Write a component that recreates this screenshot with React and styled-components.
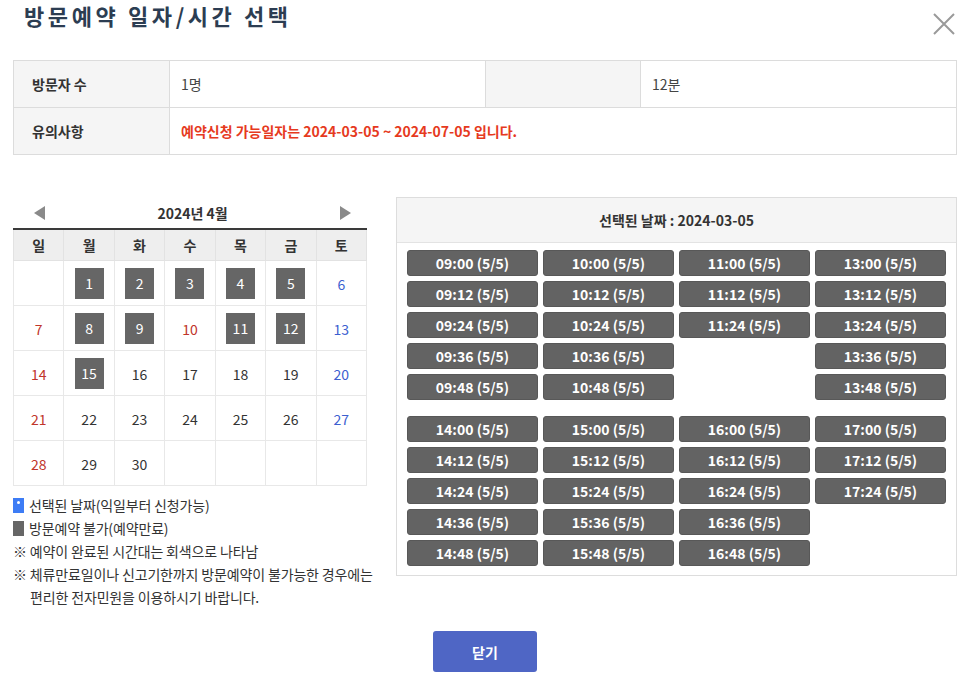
import styled, { createGlobalStyle } from "styled-components";

const GlobalStyle = createGlobalStyle`
  body {
    margin: 0;
    background: #fff;
    font-family: "Noto Sans CJK KR", "Noto Sans", sans-serif;
    color: #333;
  }
`;

const weekDays = ["일", "월", "화", "수", "목", "금", "토"];

// April 2024, starts on Monday
const weeks = [
  [null, 1, 2, 3, 4, 5, 6],
  [7, 8, 9, 10, 11, 12, 13],
  [14, 15, 16, 17, 18, 19, 20],
  [21, 22, 23, 24, 25, 26, 27],
  [28, 29, 30, null, null, null, null],
];
const blocked = [1, 2, 3, 4, 5, 8, 9, 11, 12, 15];
const holidays = [10];

const minutes = ["00", "12", "24", "36", "48"];
const slotGroups = [
  [
    ["09", 5],
    ["10", 5],
    ["11", 3],
    ["13", 5],
  ],
  [
    ["14", 5],
    ["15", 5],
    ["16", 5],
    ["17", 3],
  ],
];

const dayTone = (day, col) => {
  if (col === 0 || holidays.includes(day)) return "sun";
  if (col === 6) return "sat";
  return "normal";
};

const App = () => {
  return (
    <Page>
      <GlobalStyle />
      <Header>
        <Title>방문예약 일자/시간 선택</Title>
        <CloseIcon aria-label="close">
          <svg width="22" height="22" viewBox="0 0 22 22">
            <path d="M1 1 L21 21 M21 1 L1 21" stroke="#9a9a9a" strokeWidth="2" fill="none" />
          </svg>
        </CloseIcon>
      </Header>

      <InfoTable>
        <colgroup>
          <col style={{ width: 156 }} />
          <col style={{ width: 316 }} />
          <col style={{ width: 155 }} />
          <col />
        </colgroup>
        <tbody>
          <tr>
            <LabelCell>방문자 수</LabelCell>
            <ValueCell>1명</ValueCell>
            <LabelCell />
            <ValueCell>12분</ValueCell>
          </tr>
          <tr>
            <LabelCell>유의사항</LabelCell>
            <ValueCell colSpan={3} warn>
              예약신청 가능일자는 2024-03-05 ~ 2024-07-05 입니다.
            </ValueCell>
          </tr>
        </tbody>
      </InfoTable>

      <Main>
        <CalendarColumn>
          <CalendarNav>
            <Arrow dir="left" />
            <MonthLabel>2024년 4월</MonthLabel>
            <Arrow dir="right" />
          </CalendarNav>
          <CalendarTable>
            <thead>
              <tr>
                {weekDays.map((d) => (
                  <WeekHead key={d}>{d}</WeekHead>
                ))}
              </tr>
            </thead>
            <tbody>
              {weeks.map((week, wi) => (
                <tr key={wi}>
                  {week.map((day, ci) => (
                    <DayCell key={ci}>
                      {day &&
                        (blocked.includes(day) ? (
                          <BlockedDay>{day}</BlockedDay>
                        ) : (
                          <DayNum tone={dayTone(day, ci)}>{day}</DayNum>
                        ))}
                    </DayCell>
                  ))}
                </tr>
              ))}
            </tbody>
          </CalendarTable>

          <Legend>
            <LegendItem>
              <Swatch color="#3d7cf5">
                <Dot />
              </Swatch>
              선택된 날짜(익일부터 신청가능)
            </LegendItem>
            <LegendItem>
              <Swatch color="#666" />
              방문예약 불가(예약만료)
            </LegendItem>
            <Note>※ 예약이 완료된 시간대는 회색으로 나타남</Note>
            <Note>
              ※ 체류만료일이나 신고기한까지 방문예약이 불가능한 경우에는
              <br />
              편리한 전자민원을 이용하시기 바랍니다.
            </Note>
          </Legend>
        </CalendarColumn>

        <TimePanel>
          <TimeHeader>선택된 날짜 : 2024-03-05</TimeHeader>
          <TimeBody>
            {slotGroups.map((group, gi) => (
              <SlotGroup key={gi}>
                {group.map(([hour, count]) => (
                  <SlotColumn key={hour}>
                    {minutes.slice(0, count).map((m) => (
                      <SlotButton key={m}>
                        {hour}:{m} (5/5)
                      </SlotButton>
                    ))}
                  </SlotColumn>
                ))}
              </SlotGroup>
            ))}
          </TimeBody>
        </TimePanel>
      </Main>

      <Footer>
        <CloseButton>닫기</CloseButton>
      </Footer>
    </Page>
  );
};

const Page = styled.div`
  width: 944px;
  padding: 0 9px 0 13px;
`;

const Header = styled.div`
  display: flex;
  justify-content: space-between;
  align-items: flex-start;
  height: 60px;
`;

const Title = styled.h1`
  margin: 0;
  padding-left: 11px;
  font-size: 22px;
  line-height: 31px;
  font-weight: 700;
  letter-spacing: 3.6px;
  color: #2c3d52;
`;

const CloseIcon = styled.button`
  margin: 13px 2px 0 0;
  padding: 0;
  border: 0;
  background: none;
  width: 22px;
  height: 22px;
  cursor: pointer;
  svg {
    display: block;
  }
`;

const InfoTable = styled.table`
  width: 100%;
  border-collapse: collapse;
  table-layout: fixed;
  border: 1px solid #dcdcdc;
  font-size: 14px;
`;

const LabelCell = styled.th`
  height: 46px;
  padding: 0 0 0 18px;
  text-align: left;
  font-weight: 700;
  color: #333;
  background: #f5f5f5;
  border: 1px solid #dcdcdc;
`;

const ValueCell = styled.td`
  height: 46px;
  padding: 0 0 0 11px;
  border: 1px solid #dcdcdc;
  color: ${(props) => (props.warn ? "#e63a1e" : "#444")};
  font-weight: ${(props) => (props.warn ? 700 : 400)};
`;

const Main = styled.div`
  display: flex;
  align-items: flex-start;
  gap: 29px;
  margin-top: 42px;
`;

const CalendarColumn = styled.div`
  width: 354px;
  flex: none;
`;

const CalendarNav = styled.div`
  display: flex;
  align-items: center;
  justify-content: space-between;
  height: 31px;
  padding: 0 16px 0 21px;
`;

const Arrow = styled.span`
  width: 0;
  height: 0;
  border-top: 7px solid transparent;
  border-bottom: 7px solid transparent;
  ${(props) =>
    props.dir === "left"
      ? "border-right: 11px solid #8a8a8a;"
      : "border-left: 11px solid #8a8a8a;"}
`;

const MonthLabel = styled.span`
  font-size: 14px;
  font-weight: 700;
  color: #333;
`;

const CalendarTable = styled.table`
  width: 100%;
  border-collapse: collapse;
  table-layout: fixed;
  border-top: 2px solid #3a3a3a;
`;

const WeekHead = styled.th`
  height: 30px;
  padding: 0;
  background: #eeeeee;
  border: 1px solid #e2e2e2;
  border-top: 0;
  font-size: 14px;
  font-weight: 700;
  color: #333;
`;

const DayCell = styled.td`
  height: 44px;
  padding: 0;
  border: 1px solid #e8e8e8;
  text-align: center;
  vertical-align: middle;
`;

const DayNum = styled.span`
  font-size: 14px;
  color: ${(props) =>
    props.tone === "sun" ? "#c0352a" : props.tone === "sat" ? "#3c5fd0" : "#333"};
`;

const BlockedDay = styled.span`
  display: inline-flex;
  align-items: center;
  justify-content: center;
  width: 29px;
  height: 31px;
  background: #666;
  color: #fff;
  font-size: 14px;
`;

const Legend = styled.div`
  width: 380px;
  margin-top: 8px;
  font-size: 14px;
  line-height: 23px;
  letter-spacing: -0.15px;
  color: #333;
  white-space: nowrap;
`;

const LegendItem = styled.div`
  display: flex;
  align-items: center;
  gap: 5px;
`;

const Swatch = styled.span`
  position: relative;
  width: 11px;
  height: 15px;
  background: ${(props) => props.color};
`;

const Dot = styled.span`
  position: absolute;
  left: 4px;
  top: 3px;
  width: 3px;
  height: 3px;
  border-radius: 50%;
  background: #fff;
`;

const Note = styled.div`
  padding-left: 17px;
  text-indent: -17px;
`;

const TimePanel = styled.div`
  flex: 1;
  border: 1px solid #dddddd;
`;

const TimeHeader = styled.div`
  height: 44px;
  display: flex;
  align-items: center;
  justify-content: center;
  background: #f5f5f5;
  border-bottom: 1px solid #e3e3e3;
  font-size: 14px;
  font-weight: 700;
  color: #333;
`;

const TimeBody = styled.div`
  display: flex;
  flex-direction: column;
  gap: 16px;
  padding: 7px 10px 9px;
`;

const SlotGroup = styled.div`
  display: grid;
  grid-template-columns: repeat(4, 1fr);
  column-gap: 5px;
  align-items: start;
`;

const SlotColumn = styled.div`
  display: flex;
  flex-direction: column;
  gap: 5px;
`;

const SlotButton = styled.button`
  height: 26px;
  padding: 0;
  border: 1px solid #585858;
  border-radius: 3px;
  background: #636363;
  color: #fff;
  font-family: inherit;
  font-size: 14px;
  font-weight: 700;
  cursor: default;
`;

const Footer = styled.div`
  display: flex;
  justify-content: center;
  margin-top: 22px;
`;

const CloseButton = styled.button`
  width: 104px;
  height: 41px;
  border: 0;
  border-radius: 3px;
  background: #4f66c5;
  color: #fff;
  font-family: inherit;
  font-size: 14px;
  font-weight: 700;
  cursor: pointer;
`;

export default App;
